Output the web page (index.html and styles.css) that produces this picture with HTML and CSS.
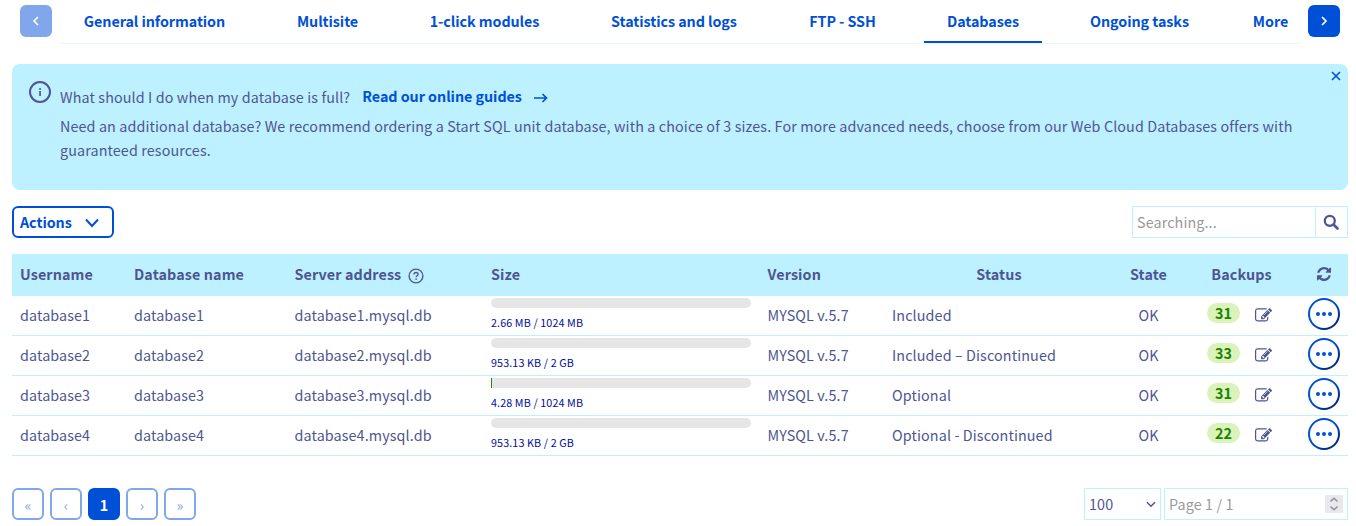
FILE: index.html
```html
<!DOCTYPE html>
<html lang="en">
<head>
<meta charset="utf-8">
<title>Databases</title>
<link rel="stylesheet" href="styles.css">
</head>
<body>
<svg class="defs" width="0" height="0">
  <symbol id="edit" viewBox="0 0 1792 1792"><path d="M888 1184l116-116-152-152-116 116v56h96v96h56zm440-720q-16-16-33 1l-350 350q-17 17-1 33t33-1l350-350q17-17 1-33zm80 594v190q0 119-84.500 203.500t-203.500 84.500h-832q-119 0-203.500-84.500t-84.500-203.500v-832q0-119 84.500-203.500t203.500-84.500h832q63 0 117 25 15 7 18 23 3 17-9 29l-49 49q-14 14-32 8-23-6-45-6h-832q-66 0-113 47t-47 113v832q0 66 47 113t113 47h832q66 0 113-47t47-113v-126q0-13 9-22l64-64q15-15 35-7t20 29zm-96-738l288 288-672 672h-288v-288zm444 132l-92 92-288-288 92-92q28-28 68-28t68 28l152 152q28 28 28 68t-28 68z"/></symbol>
  <symbol id="dots" viewBox="0 0 16 6"><circle cx="2" cy="3" r="2"/><circle cx="8" cy="3" r="2"/><circle cx="14" cy="3" r="2"/></symbol>
</svg>

<nav class="tabs">
  <button class="arrow disabled"><svg width="12" height="12" viewBox="0 0 12 12"><path d="M8 2 4 6l4 4"/></svg></button>
  <div class="tab-list">
    <a class="tab">General information</a>
    <a class="tab">Multisite</a>
    <a class="tab">1-click modules</a>
    <a class="tab">Statistics and logs</a>
    <a class="tab">FTP - SSH</a>
    <a class="tab active">Databases</a>
    <a class="tab">Ongoing tasks</a>
    <a class="tab">More</a>
  </div>
  <button class="arrow"><svg width="12" height="12" viewBox="0 0 12 12"><path d="M4 2l4 4-4 4"/></svg></button>
</nav>

<section class="banner">
  <svg class="info" width="24" height="24" viewBox="0 0 24 24"><circle cx="12" cy="12" r="10" fill="none" stroke="currentColor" stroke-width="2"/><path d="M11.200 11h1.700v5h-1.700zM11.200 8h1.700v1.700h-1.700z" fill="currentColor"/></svg>
  <div class="banner-text">
    <p class="question">What should I do when my database is full? <a class="guide">Read our online guides <svg width="14" height="10" viewBox="0 0 14 10"><path d="M0 5h12.500M8.500 1l4 4-4 4"/></svg></a></p>
    <p class="advice">Need an additional database? We recommend ordering a Start SQL unit database, with a choice of 3 sizes. For more advanced needs, choose from our Web Cloud Databases offers with<br>guaranteed resources.</p>
  </div>
  <svg class="close" width="10" height="10" viewBox="0 0 10 10"><path d="M1 1l8 8M9 1 1 9"/></svg>
</section>

<div class="toolbar">
  <button class="actions">Actions<svg width="16" height="10" viewBox="0 0 16 10"><path d="M2 1.500 8 8l6-6.500"/></svg></button>
  <div class="search">
    <span class="search-input">Searching...</span>
    <span class="search-button"><svg width="16" height="16" viewBox="0 0 16 16"><circle cx="6.800" cy="6.800" r="5" fill="none" stroke="currentColor" stroke-width="2.300"/><path d="M10.500 10.500l4 4" stroke="currentColor" stroke-width="2.600" stroke-linecap="round"/></svg></span>
  </div>
</div>

<main class="table">
  <div class="row head">
    <span>Username</span><span>Database name</span>
    <span>Server address<svg class="help" width="16" height="16" viewBox="0 0 16 16"><circle cx="8" cy="8" r="6.900"/><path d="M6 6.400c0-2.700 4.100-2.500 4.100-.1 0 1.500-2 1.500-2 3"/><path d="M8.100 10.600v1.300"/></svg></span>
    <span>Size</span><span>Version</span><span class="center">Status</span><span class="center">State</span><span class="center">Backups</span>
    <span class="refresh"><svg width="14" height="14" viewBox="128 128 1536 1536"><path d="M1639 1056q0 5-1 7-64 268-268 434.500t-478 166.500q-146 0-282.500-55t-243.500-157l-129 129q-19 19-45 19t-45-19-19-45v-448q0-26 19-45t45-19h448q26 0 45 19t19 45-19 45l-137 137q71 66 161 102t187 36q134 0 250-65t186-179q11-17 53-117 8-23 30-23h192q13 0 22.500 9.500t9.500 22.500zm25-800v448q0 26-19 45t-45 19h-448q-26 0-45-19t-19-45 19-45l138-138q-148-137-349-137-134 0-250 65t-186 179q-11 17-53 117-8 23-30 23h-199q-13 0-22.500-9.500t-9.500-22.500v-7q65-268 270-434.500t480-166.500q146 0 284 55.500t245 156.500l130-129q19-19 45-19t45 19 19 45z"/></svg></span>
  </div>
  <div class="row">
    <span>database1</span><span>database1</span><span>database1.mysql.db</span>
    <div class="size"><div class="bar"></div><small>2.66 MB / 1024 MB</small></div>
    <span>MYSQL v.5.7</span><span>Included</span><span class="center">OK</span>
    <div class="backups"><b class="badge">31</b><svg width="17" height="17"><use href="#edit"/></svg></div>
    <button class="menu"><svg width="16" height="6"><use href="#dots"/></svg></button>
  </div>
  <div class="row">
    <span>database2</span><span>database2</span><span>database2.mysql.db</span>
    <div class="size"><div class="bar"></div><small>953.13 KB / 2 GB</small></div>
    <span>MYSQL v.5.7</span><span>Included – Discontinued</span><span class="center">OK</span>
    <div class="backups"><b class="badge">33</b><svg width="17" height="17"><use href="#edit"/></svg></div>
    <button class="menu"><svg width="16" height="6"><use href="#dots"/></svg></button>
  </div>
  <div class="row">
    <span>database3</span><span>database3</span><span>database3.mysql.db</span>
    <div class="size"><div class="bar started"></div><small>4.28 MB / 1024 MB</small></div>
    <span>MYSQL v.5.7</span><span>Optional</span><span class="center">OK</span>
    <div class="backups"><b class="badge">31</b><svg width="17" height="17"><use href="#edit"/></svg></div>
    <button class="menu"><svg width="16" height="6"><use href="#dots"/></svg></button>
  </div>
  <div class="row">
    <span>database4</span><span>database4</span><span>database4.mysql.db</span>
    <div class="size"><div class="bar"></div><small>953.13 KB / 2 GB</small></div>
    <span>MYSQL v.5.7</span><span>Optional - Discontinued</span><span class="center">OK</span>
    <div class="backups"><b class="badge">22</b><svg width="17" height="17"><use href="#edit"/></svg></div>
    <button class="menu"><svg width="16" height="6"><use href="#dots"/></svg></button>
  </div>
</main>

<footer class="footer">
  <div class="pages">
    <button class="page">«</button><button class="page">‹</button><button class="page current">1</button><button class="page">›</button><button class="page">»</button>
  </div>
  <div class="paging">
    <div class="select">100<svg width="10" height="7" viewBox="0 0 10 7"><path d="M1 1.200l4 4 4-4"/></svg></div>
    <div class="page-input">Page 1 / 1<span class="spinner"><svg width="10" height="14" viewBox="0 0 10 14"><path d="M1.500 4.500 5 1.200l3.500 3.300M1.500 9.500 5 12.800l3.500-3.300"/></svg></span></div>
  </div>
</footer>
</body>
</html>
```
FILE: styles.css
```css
* { box-sizing: border-box; }
body {
  margin: 0;
  width: 1356px;
  height: 526px;
  padding: 5px 8px 0 12px;
  overflow: hidden;
  background: #fff;
  color: #4d5592;
  font-family: "Noto Sans CJK SC", "Noto Sans", sans-serif;
  font-size: 14.33px;
  line-height: 24px;
  letter-spacing: 0.115px;
}
p { margin: 0; }
button {
  display: flex;
  align-items: center;
  justify-content: center;
  padding: 0;
  font: inherit;
  background: #fff;
}
svg { display: block; flex: none; }
.defs { position: absolute; }

.tabs { display: flex; padding: 0 8px; height: 39px; }
.arrow { width: 32px; height: 32px; border: 0; border-radius: 6px; background: #0050d7; }
.arrow svg { fill: none; stroke: #fff; stroke-width: 1.7; }
.arrow.disabled { background: #80a7eb; }
.tab-list {
  display: grid;
  grid-template-columns: 189px 109px 157px 174px 115px 118px 147px 75px;
  column-gap: 24px;
  justify-content: start;
  width: 1240px;
  margin: 0 8px;
  border-bottom: 1px solid #e8f5fc;
}
.tab-list .tab:last-child { margin-left: -8px; }
.tab {
  padding-top: 4px;
  height: 38px;
  text-align: center;
  color: #0050d7;
  font-weight: 700;
  letter-spacing: -0.07px;
  white-space: nowrap;
}
.tab.active { border-bottom: 2px solid #0050d7; }

.banner {
  display: flex;
  position: relative;
  height: 126px;
  margin-top: 20px;
  padding: 16px 16px 0;
  border-radius: 8px;
  background: #bef1ff;
}
.info { margin-right: 8px; }
.question { display: flex; margin-top: 5px; }
.guide { display: flex; align-items: center; margin: -1px 0 1px 12px; color: #0050d7; font-weight: 700; letter-spacing: -0.05px; }
.guide svg { margin: 3px 0 0 12px; fill: none; stroke: currentColor; stroke-width: 1.7; }
.advice { margin-top: 5px; white-space: nowrap; }
.close { position: absolute; top: 7px; right: 7px; stroke: #0050d7; stroke-width: 1.6; }

.toolbar { display: flex; justify-content: space-between; margin-top: 16px; }
.actions {
  justify-content: flex-start;
  width: 102px;
  height: 32px;
  padding-left: 6px;
  border: 2px solid #0050d7;
  border-radius: 6px;
  color: #0050d7;
  font-weight: 700;
  letter-spacing: -0.07px;
}
.actions svg { margin: 2px 0 0 12px; fill: none; stroke: currentColor; stroke-width: 2; }
.search { display: flex; width: 216px; height: 32px; border: 1px solid #bef1ff; }
.search-input { flex: 1; padding: 3px 4px; color: #999; }
.search-button { display: grid; place-items: center; width: 32px; padding-right: 1px; border-left: 1px solid #bef1ff; }

.table { margin-top: 16px; }
.row {
  display: grid;
  grid-template-columns: 114px 160.5px 196.500px 276.500px 124.500px 230px 69px 117px 48px;
  height: 40px;
  border-bottom: 1px solid #bef1ff;
  white-space: nowrap;
}
.row > span { padding: 7px 8px 0; }
.row.head { height: 42px; background: #bef1ff; font-weight: 700; }
.row.head > span { padding-top: 8px; }
.row > .center { text-align: center; }
.help { display: inline-block; margin-left: 7px; vertical-align: -4px; fill: none; stroke: currentColor; stroke-width: 1.4; }
.refresh svg { margin: 5px auto 0; fill: currentColor; }
.size { padding: 2px 8px 0; color: #000e9c; }
.size small { display: block; margin-top: 6px; font-size: 10.75px; line-height: 18px; }
.bar { width: 260px; height: 10px; border-radius: 5px; background: #e6e6e6; }
.bar.started { border-left: 1px solid #268403; border-radius: 0 5px 5px 0; }
.backups { display: flex; align-items: flex-start; padding: 7px 0 0 24px; }
.backups svg { margin: 4px 0 0 14.5px; fill: currentColor; }
.badge { width: 33px; height: 20px; border-radius: 10px; background: #daf3ba; color: #1e8200; line-height: 20px; text-align: center; }
.menu { width: 32px; height: 32px; margin: 2px 0 0 8px; border: 2px solid transparent; border-radius: 50%; background: linear-gradient(#fff, #fff) padding-box, linear-gradient(135deg, #0050d7 45%, #00185e) border-box; }
.menu svg { fill: #0050d7; }

.footer { display: flex; justify-content: space-between; margin-top: 32px; }
.pages { display: flex; gap: 6px; }
.page { width: 32px; height: 32px; padding-top: 1px; border: 2px solid #80a7eb; border-radius: 6px; color: #80a7eb; }
.page.current { border-color: #0050d7; background: #0050d7; color: #fff; font-weight: 700; }
.paging { display: flex; gap: 3px; }
.select, .page-input { display: flex; align-items: center; justify-content: space-between; height: 32px; padding: 0 4px; border: 1px solid #bef1ff; }
.select { width: 77px; }
.select svg { fill: none; stroke: currentColor; stroke-width: 1.500; }
.page-input { width: 184px; color: #999; }
.spinner { display: grid; place-items: center; width: 18px; height: 18px; background: #e9e9ed; }
.spinner svg { fill: none; stroke: #8f8f9d; stroke-width: 1.500; }
```
